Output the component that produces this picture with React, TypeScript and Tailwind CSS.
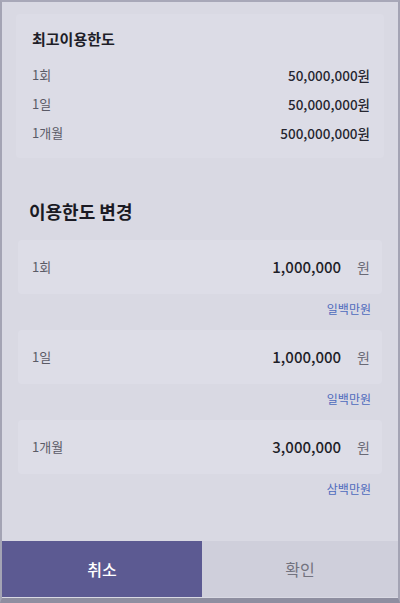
import React from "react";

const maxLimits = [
  { label: "1회", value: "50,000,000원" },
  { label: "1일", value: "50,000,000원" },
  { label: "1개월", value: "500,000,000원" },
];

const changeLimits = [
  { label: "1회", value: "1,000,000", hint: "일백만원" },
  { label: "1일", value: "1,000,000", hint: "일백만원" },
  { label: "1개월", value: "3,000,000", hint: "삼백만원" },
];

export default function App() {
  return (
    <div
      className="flex h-[603px] w-[400px] flex-col overflow-hidden border-x-2 border-t-2 border-b-[5px] border-x-[#a4a4b4] border-t-[#a8a8b8] border-b-[#8e8ea0] bg-[#d9d9e3] text-[#222]"
      style={{ fontFamily: '"Noto Sans CJK KR", "Noto Sans", sans-serif' }}
    >
      <div className="flex-1">
        <section className="mx-[14px] mt-[12px] rounded-sm bg-[#dcdce6] pb-[14px] pl-[16px] pr-[14px] pt-[14px]">
          <h2 className="text-[15px] font-bold leading-[22px] text-[#1e1e28]">최고이용한도</h2>
          <div className="mt-[14px] flex flex-col gap-[7px]">
            {maxLimits.map((row) => (
              <div key={row.label} className="flex items-center justify-between leading-[22px]">
                <span className="text-[13px] text-[#5a5a66]">{row.label}</span>
                <span className="text-[13.5px] font-medium text-[#262630]">{row.value}</span>
              </div>
            ))}
          </div>
        </section>

        <h2 className="ml-[27px] mt-[40px] text-[18px] font-bold leading-[26px] text-[#1a1a24]">
          이용한도 변경
        </h2>

        <div className="mt-[16px] flex flex-col">
          {changeLimits.map((row, i) => (
            <div key={row.label} className={i === 0 ? "" : "mt-[4px]"}>
              <div className="mx-[16px] flex h-[54px] items-center rounded-sm bg-[#dddde7] pl-[14px] pr-[12px]">
                <span className="flex-1 text-[13px] text-[#5a5a66]">{row.label}</span>
                <span className="text-[15px] font-medium text-[#1e1e28]">{row.value}</span>
                <span className="ml-[16px] text-[14px] text-[#6a6a76]">원</span>
              </div>
              <div className="mr-[27px] mt-[5px] h-[27px] text-right text-[12px] leading-[20px] text-[#4f6bbd]">
                {row.hint}
              </div>
            </div>
          ))}
        </div>
      </div>

      <div className="mb-[1px] flex h-[56px]">
        <button type="button" className="w-[200px] bg-[#5c5a92] text-[16px] font-medium text-white">
          취소
        </button>
        <button type="button" className="flex-1 bg-[#cfcfdb] text-[16px] text-[#73737f]">
          확인
        </button>
      </div>
    </div>
  );
}
